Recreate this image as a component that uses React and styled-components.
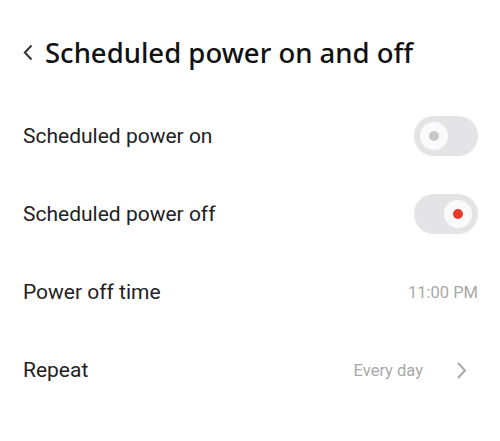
import React from "react";
import styled, { createGlobalStyle } from "styled-components";

const GlobalStyle = createGlobalStyle`
  html, body {
    margin: 0;
    padding: 0;
    background: #ffffff;
  }
  body {
    font-family: Roboto, "Noto Sans", sans-serif;
  }
`;

const Page = styled.div`
  width: 500px;
  height: 441px;
  background: #fff;
  box-sizing: border-box;
  padding: 0 22px 0 23px;
`;

const Header = styled.div`
  height: 97px;
  display: flex;
  align-items: center;
  gap: 12px;
  box-sizing: border-box;
  padding-top: 7px;
`;

const BackButton = styled.button`
  border: 0;
  background: none;
  padding: 0;
  display: flex;
  align-items: center;
  cursor: pointer;
`;

const Title = styled.h1`
  margin: 0;
  font-family: "Noto Sans", sans-serif;
  font-weight: 500;
  font-size: 27.5px;
  color: #111;
`;

const List = styled.div`
  display: flex;
  flex-direction: column;
`;

const Row = styled.div`
  height: 78px;
  display: flex;
  align-items: center;
  justify-content: space-between;
`;

const Label = styled.span`
  font-size: 21px;
  color: #222;
`;

const Value = styled.span`
  font-size: 16.5px;
  color: #a8a8a8;
`;

const Right = styled.div`
  display: flex;
  align-items: center;
  gap: 33px;
  padding-right: 11px;
`;

const Track = styled.div`
  width: 64px;
  height: 40px;
  border-radius: 20px;
  background: #e4e4e6;
  display: flex;
  align-items: center;
  justify-content: ${(p) => (p.on ? "flex-end" : "flex-start")};
  padding: 0 6px;
  box-sizing: border-box;
`;

const Knob = styled.div`
  width: 28px;
  height: 28px;
  border-radius: 50%;
  background: #fafafa;
  display: flex;
  align-items: center;
  justify-content: center;
`;

const Dot = styled.div`
  width: 10px;
  height: 10px;
  border-radius: 50%;
  background: ${(p) => (p.on ? "#e8392a" : "#c8c8c8")};
`;

const Toggle = ({ on }) => (
  <Track on={on ? 1 : 0}>
    <Knob>
      <Dot on={on ? 1 : 0} />
    </Knob>
  </Track>
);

export default function App() {
  return (
    <>
      <GlobalStyle />
      <Page>
        <Header>
          <BackButton>
            <svg width="10" height="17" viewBox="0 0 10 17">
              <path
                d="M8.5 1.5 L1.8 8.5 L8.5 15.5"
                fill="none"
                stroke="#333"
                strokeWidth="2"
              />
            </svg>
          </BackButton>
          <Title>Scheduled power on and off</Title>
        </Header>
        <List>
          <Row>
            <Label>Scheduled power on</Label>
            <Toggle />
          </Row>
          <Row>
            <Label>Scheduled power off</Label>
            <Toggle on />
          </Row>
          <Row>
            <Label>Power off time</Label>
            <Value>11:00 PM</Value>
          </Row>
          <Row>
            <Label>Repeat</Label>
            <Right>
              <Value>Every day</Value>
              <svg width="11" height="19" viewBox="0 0 11 19">
                <path
                  d="M2 2 L9 9.5 L2 17"
                  fill="none"
                  stroke="#a8a8ad"
                  strokeWidth="2"
                />
              </svg>
            </Right>
          </Row>
        </List>
      </Page>
    </>
  );
}
